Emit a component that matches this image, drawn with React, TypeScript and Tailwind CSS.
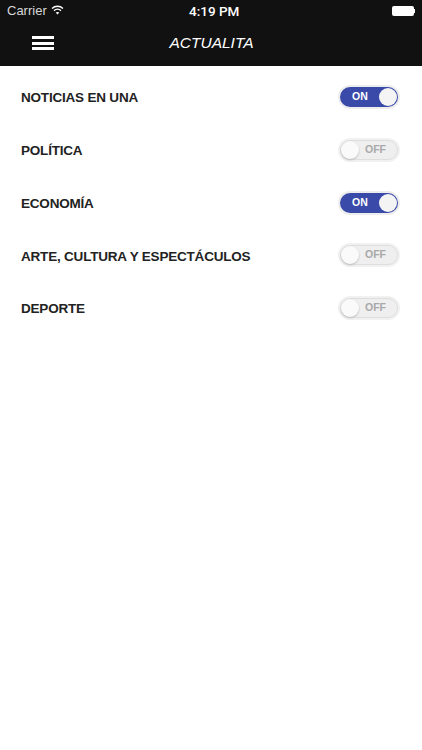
import React from "react";

const rows = [
  { label: "NOTICIAS EN UNA", on: true },
  { label: "POLÍTICA", on: false },
  { label: "ECONOMÍA", on: true },
  { label: "ARTE, CULTURA Y ESPECTÁCULOS", on: false },
  { label: "DEPORTE", on: false },
];

function Toggle({ on }: { on: boolean }) {
  if (on) {
    return (
      <div className="flex h-[20px] w-[58px] items-center justify-between rounded-full bg-[#3a4aa8] pl-[12px] pr-[1px] shadow-[0_0_0_2px_#ededed]">
        <span className="text-[10.5px] font-bold text-white">ON</span>
        <span className="h-[18px] w-[18px] rounded-full bg-[#f4f4f4]" />
      </div>
    );
  }
  return (
    <div className="flex h-[20px] w-[58px] items-center justify-between rounded-full border border-[#dedede] bg-[#efeff0] pr-[11px] shadow-[0_0_0_2px_#f1f1f1]">
      <span className="h-[18px] w-[18px] rounded-full bg-[#fafafa] shadow-[0_1px_2px_#bbbbbb]" />
      <span className="text-[10.5px] font-bold text-[#a8a8a8]">OFF</span>
    </div>
  );
}

export default function App() {
  return (
    <div className="h-[750px] w-[422px] bg-white font-['Liberation_Sans',sans-serif]">
      <div className="h-[66px] bg-[#111111] text-white">
        <div className="relative flex h-[22px] items-center justify-between pl-[7px] pr-[7px]">
          <div className="flex items-center gap-[4px] text-[13px] text-[#d8d8d8]">
            <span>Carrier</span>
            <svg width="13" height="10" viewBox="0 0 13 10" fill="none" stroke="white" strokeWidth="1.4" className="-translate-y-[1px]">
              <path d="M1 3.5C4.2 0.5 8.8 0.5 12 3.5" />
              <path d="M3 5.6C5 3.9 8 3.9 10 5.6" />
              <path d="M6.5 9.6L4.7 7.4C5.7 6.7 7.3 6.7 8.3 7.4Z" fill="white" stroke="none" />
            </svg>
          </div>
          <span className="absolute left-[189px] font-['Roboto',sans-serif] text-[13.5px] font-medium">4:19 PM</span>
          <div className="flex items-center">
            <div className="h-[10px] w-[22px] rounded-[2px] bg-white" />
            <div className="h-[4px] w-[1px] bg-white" />
          </div>
        </div>
        <div className="relative flex h-[44px] items-center justify-center pb-[2px] pl-[1px]">
          <div className="absolute left-[32px] top-[14px] flex w-[22px] flex-col gap-[2.5px]">
            <div className="h-[3px] bg-white" />
            <div className="h-[3px] bg-white" />
            <div className="h-[3px] bg-white" />
          </div>
          <span className="text-[15.5px] italic">ACTUALITA</span>
        </div>
      </div>
      <div className="flex flex-col gap-[30.75px] pl-[21px] pr-[24px] pt-[20px]">
        {rows.map((row) => (
          <div key={row.label} className="flex h-[22px] items-center justify-between">
            <span className="pt-[3px] text-[13.5px] font-bold tracking-[-0.2px] text-[#222222]">{row.label}</span>
            <Toggle on={row.on} />
          </div>
        ))}
      </div>
    </div>
  );
}
